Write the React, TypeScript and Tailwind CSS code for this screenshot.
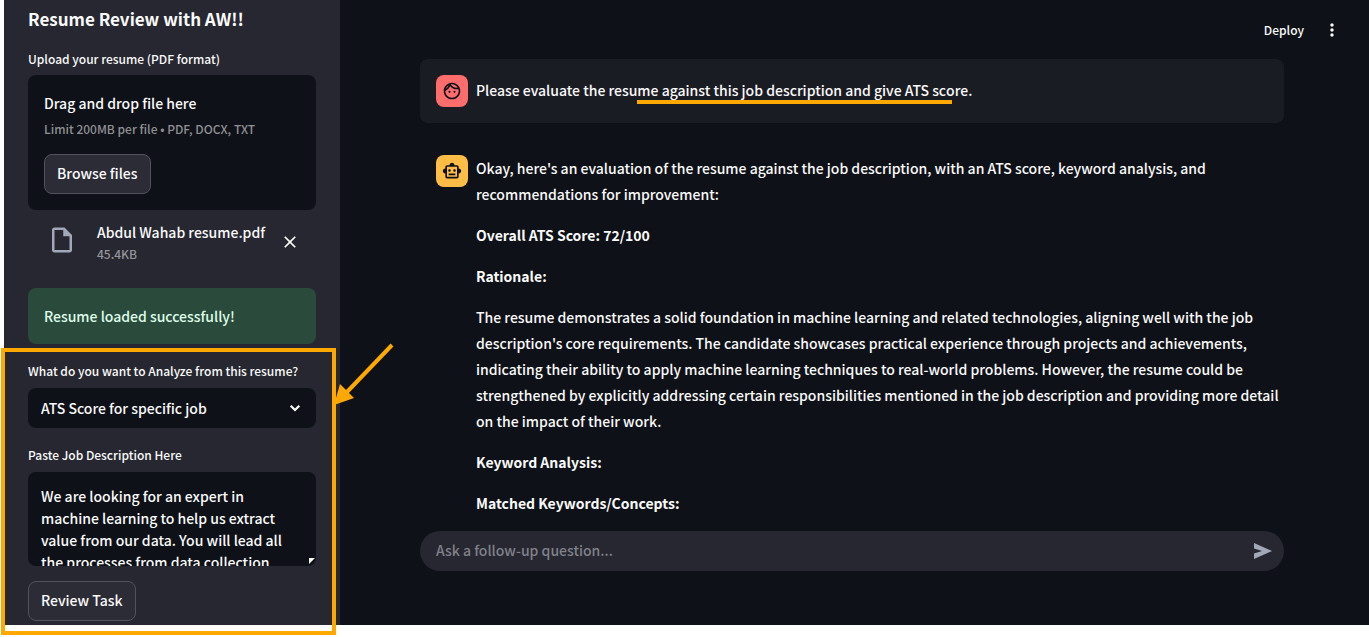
import React from "react";
import {
  MdClose,
  MdMoreVert,
  MdOutlineFace,
  MdOutlineInsertDriveFile,
  MdOutlineSmartToy,
} from "react-icons/md";

const jobDescription =
  "We are looking for an expert in machine learning to help us extract value from our data. You will lead all the processes from data collection, cleaning, and preprocessing, to training models.";

function ReviewForm() {
  return (
    <section className="relative mt-[17px]">
      <label htmlFor="analysis" className="block text-xs leading-5">
        What do you want to Analyze from this resume?
      </label>
      <div className="relative mt-[7px]">
        <select
          id="analysis"
          className="h-10 w-full appearance-none rounded-lg bg-[#0e1117] px-[13px] text-sm font-medium"
        >
          <option>ATS Score for specific job</option>
        </select>
        <svg
          className="pointer-events-none absolute top-2.5 right-[11px] size-5"
          viewBox="0 0 20 20"
          fill="none"
          aria-hidden="true"
        >
          <path d="M5.7 7.7L10 12L14.3 7.7" stroke="currentColor" strokeWidth="2.2" />
        </svg>
      </div>
      <label htmlFor="job" className="mt-[17px] block text-xs leading-5">
        Paste Job Description Here
      </label>
      <div className="relative mt-[7px]">
        <textarea
          id="job"
          defaultValue={jobDescription}
          className="block h-[94px] w-full resize-none overflow-hidden rounded-lg bg-[#0e1117] pt-[13px] pr-7 pl-[13px] text-sm leading-[22px] font-medium"
        />
        <svg className="absolute right-px bottom-0.5 size-1.5" viewBox="0 0 6 6" aria-hidden="true">
          <path d="M0 0H6L0 6Z" fill="#fff" />
        </svg>
      </div>
      <button className="mt-[15px] block h-10 rounded-lg border border-[#51525b] bg-[#2b2c36] px-3 pb-0.5 text-sm font-medium">
        Review Task
      </button>

      <div className="pointer-events-none absolute -top-[13px] -right-5 -bottom-[14px] -left-[27px] border-4 border-[#ffa800]" />
      <svg
        className="pointer-events-none absolute -top-[18px] -right-[78px] h-[64px] w-[60px]"
        viewBox="0 0 60 64"
        aria-hidden="true"
      >
        <path d="M58 2L12 50" stroke="#ffa800" strokeWidth="4" />
        <path d="M0 62L6 41L20 55Z" fill="#ffa800" />
      </svg>
    </section>
  );
}

function Sidebar() {
  return (
    <aside className="w-[336px] shrink-0 bg-[#262730] px-6 pt-[7px] pb-1">
      <h1 className="text-[17px] leading-6 font-bold">Resume Review with AW!!</h1>
      <label htmlFor="browse" className="mt-[18px] block text-xs leading-5">
        Upload your resume (PDF format)
      </label>
      <div className="mt-1.5 rounded-lg bg-[#0e1117] p-4">
        <p className="text-sm leading-6">Drag and drop file here</p>
        <p className="mt-1 text-xs leading-5 text-[#8f9094]">
          Limit 200MB per file • PDF, DOCX, TXT
        </p>
        <button
          id="browse"
          className="mt-[15px] block h-10 rounded-lg border border-[#51525b] bg-[#2b2c36] px-3 pb-0.5 text-sm font-medium"
        >
          Browse files
        </button>
      </div>
      <div className="mt-2.5 flex items-center pr-4 pl-[19px]">
        <MdOutlineInsertDriveFile className="mb-1 size-[30px] text-[#a3a8b8]" />
        <div className="ml-5 flex-1">
          <p className="text-sm leading-6">Abdul Wahab resume.pdf</p>
          <p className="text-xs leading-5 text-[#94959b]">45.4KB</p>
        </div>
        <button aria-label="Remove file">
          <MdClose className="size-5" />
        </button>
      </div>
      <div className="mt-6 rounded-lg bg-[#2a4b3c] p-4 text-sm leading-6 text-[#dffde9]">
        Resume loaded successfully!
      </div>
      <ReviewForm />
    </aside>
  );
}

function Conversation() {
  return (
    <>
      <article className="mt-[19px] flex gap-2 rounded-lg bg-[#1a1c24] p-4">
        <span className="flex size-8 shrink-0 items-center justify-center rounded-lg bg-[#ff6c6c] text-[#0e1117]">
          <MdOutlineFace className="size-5" />
        </span>
        <p className="text-sm leading-[30px]">
          Please evaluate the resu
          <span className="relative">
            me against this job description and give ATS sc
            <span className="absolute -right-1.5 -bottom-1 left-0 h-1 bg-[#ffa800]" />
          </span>
          ore.
        </p>
      </article>
      <article className="mt-8 flex gap-2 pl-4">
        <span className="flex size-8 shrink-0 items-center justify-center rounded-lg bg-[#ffbd45] text-[#0e1117]">
          <MdOutlineSmartToy className="size-5" />
        </span>
        <div className="flex flex-col gap-[15px] text-sm leading-[26px]">
          <p>
            Okay, here's an evaluation of the resume against the job description, with an ATS score,
            keyword analysis, and recommendations for improvement:
          </p>
          <p className="font-bold">Overall ATS Score: 72/100</p>
          <p className="font-bold">Rationale:</p>
          <p>
            The resume demonstrates a solid foundation in machine learning and related technologies,
            aligning well with the job description's core requirements. The candidate showcases
            practical experience through projects and achievements, indicating their ability to apply
            machine learning techniques to real-world problems. However, the resume could be
            strengthened by explicitly addressing certain responsibilities mentioned in the job
            description and providing more detail on the impact of their work.
          </p>
          <p className="font-bold">Keyword Analysis:</p>
          <p className="font-bold">Matched Keywords/Concepts:</p>
        </div>
      </article>
    </>
  );
}

export default function App() {
  return (
    <div className="flex min-h-screen bg-white pb-3 pl-1 font-['Noto_Sans_CJK_JP','Noto_Sans',sans-serif] font-medium text-[#fafafa]">
      <Sidebar />
      <div className="flex min-w-0 flex-1 flex-col bg-[#0e1117]">
        <header className="flex items-center justify-end gap-[18px] pt-5 pr-[27px]">
          <button className="text-xs leading-5 font-medium">Deploy</button>
          <button aria-label="Main menu">
            <MdMoreVert className="size-5" />
          </button>
        </header>
        <main className="flex flex-1 flex-col pr-[85px] pl-20">
          <Conversation />
          <form className="mt-auto mb-[54px] flex h-10 items-center rounded-full bg-[#262730] pr-3 pl-4">
            <input
              aria-label="Ask a follow-up question"
              placeholder="Ask a follow-up question..."
              className="min-w-0 flex-1 bg-transparent pb-0.5 text-sm font-medium outline-none placeholder:text-[#80818a]"
            />
            <button type="button" aria-label="Send">
              <svg className="h-4 w-[18px]" viewBox="0 0 18 16" aria-hidden="true">
                <path d="M0 0L18 8L0 16V10.5L8 8L0 5.5Z" fill="#a3a8b8" />
              </svg>
            </button>
          </form>
        </main>
      </div>
    </div>
  );
}
